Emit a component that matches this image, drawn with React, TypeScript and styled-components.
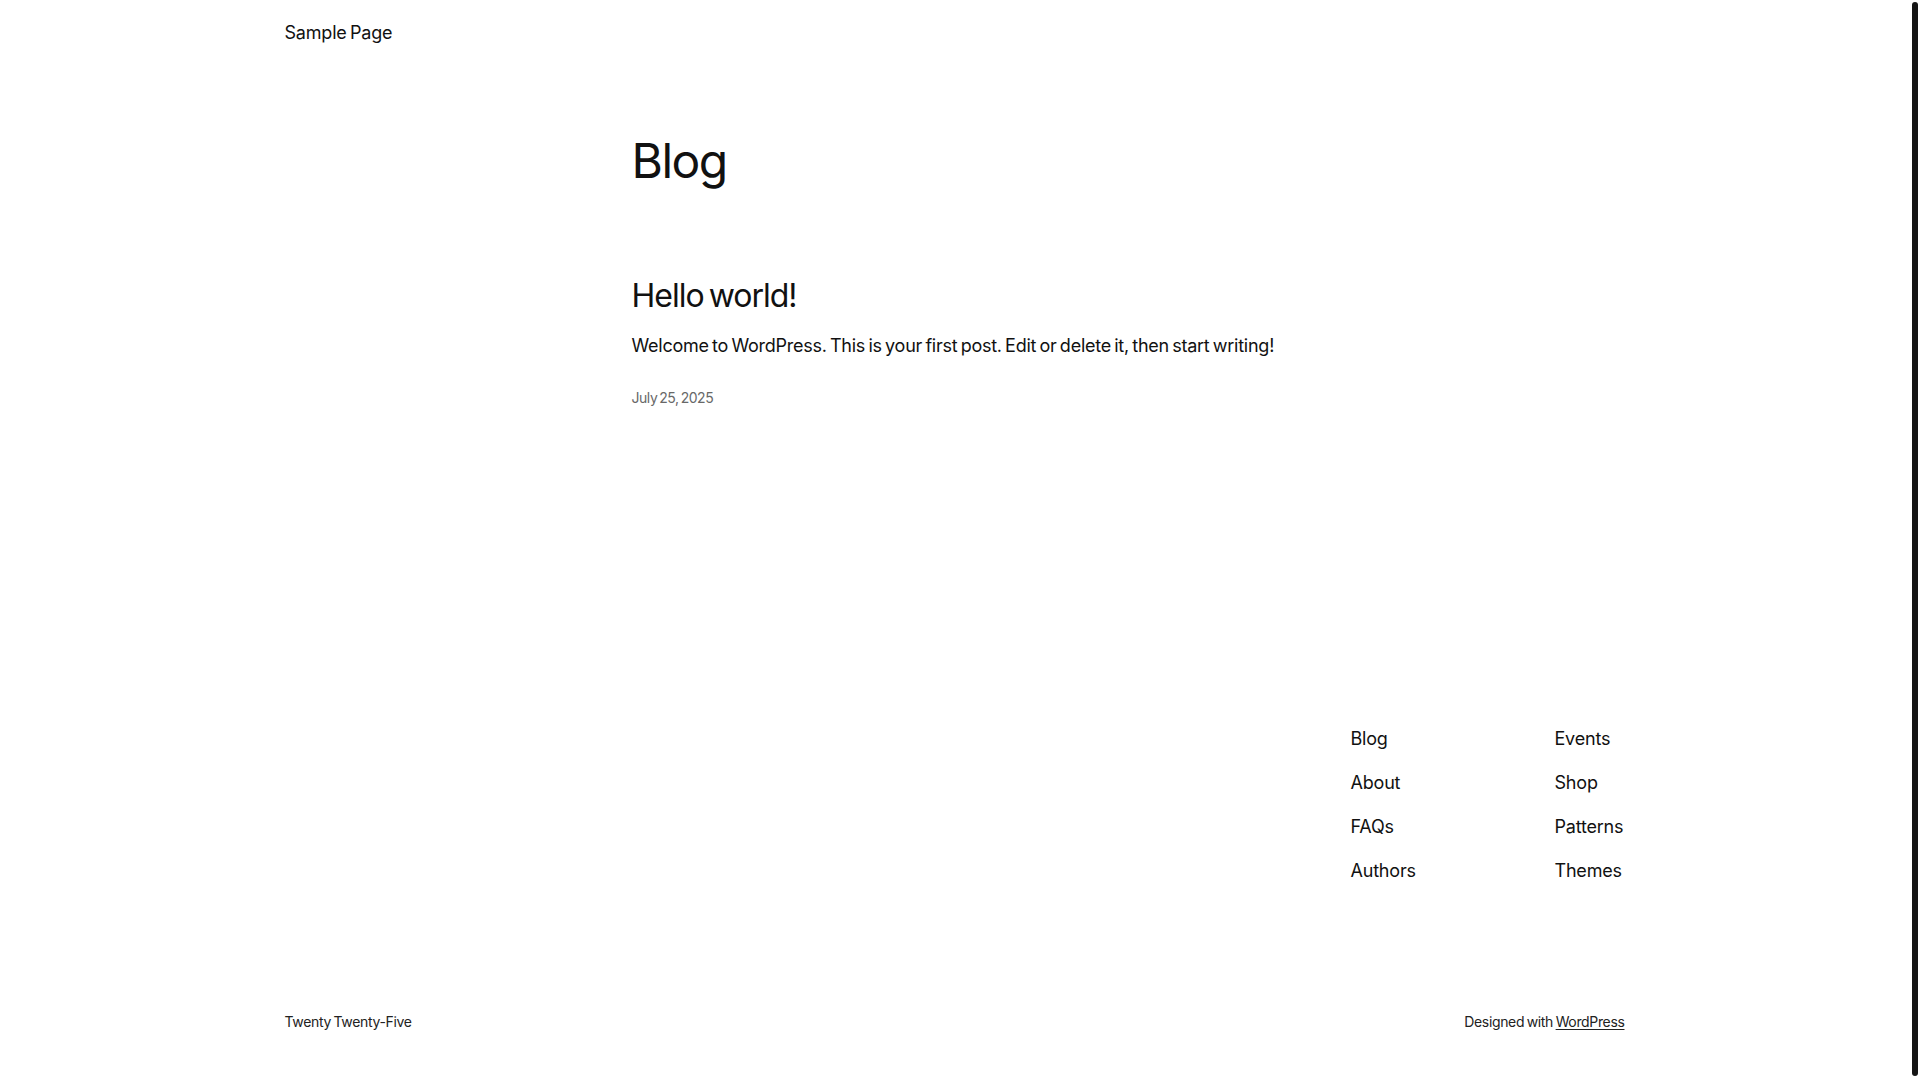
import styled, { createGlobalStyle } from 'styled-components';

const GlobalStyle = createGlobalStyle`
  html, body {
    margin: 0;
    padding: 0;
    height: 1080px;
    overflow: hidden;
    background: #ffffff;
  }
  body {
    font-family: Inter, "Noto Sans", sans-serif;
    color: #111111;
    -webkit-font-smoothing: antialiased;
  }
  a {
    color: inherit;
    text-decoration: none;
  }
`

const Shell = styled.div`
  display: flex;
  height: 1080px;
`

const Page = styled.div`
  flex: 1;
  display: flex;
  flex-direction: column;
  min-width: 0;
`

const ScrollTrack = styled.div`
  width: 15px;
  box-sizing: border-box;
  padding: 2px 2px 4px 7px;
  display: flex;
`

const ScrollThumb = styled.div`
  flex: 1;
  background: #151515;
  border-radius: 3px;
`

const Wide = styled.div`
  width: 1344px;
  margin: 0 auto;
  box-sizing: border-box;
  padding-left: 4px;
`

const Header = styled(Wide)`
  padding-top: 20px;
`

const NavLink = styled.a`
  display: block;
  font-size: 18px;
  line-height: 1.4;
  letter-spacing: -0.2px;
  word-spacing: -1.5px;
  white-space: nowrap;
`

const Main = styled.main`
  width: 645px;
  margin: 0 auto;
  padding-left: 3px;
`

const PageTitle = styled.h1`
  margin: 87px 0 0;
  font-size: 48px;
  font-weight: 400;
  line-height: 1.2;
  letter-spacing: -1.5px;
`

const Post = styled.article`
  margin-top: 87px;
`

const PostTitle = styled.h2`
  margin: 0;
  font-size: 32px;
  font-weight: 400;
  line-height: 1.2;
  letter-spacing: -1px;
  word-spacing: -3px;
`

const Excerpt = styled.p`
  margin: 18px 0 0;
  font-size: 18px;
  line-height: 1.4;
  letter-spacing: -0.25px;
  word-spacing: -1.5px;
  white-space: nowrap;
`

const PostDate = styled.time`
  display: block;
  margin-top: 30px;
  font-size: 14px;
  line-height: 1.4;
  letter-spacing: -0.45px;
  word-spacing: -1.5px;
  color: #686868;
`

const Footer = styled(Wide)`
  margin-top: 318px;
`

const FooterNavs = styled.div`
  display: grid;
  grid-template-columns: 204px 68px;
  justify-content: end;
  padding-right: 2px;
`

const NavColumn = styled.nav`
  display: flex;
  flex-direction: column;
  gap: 18.8px;
`

const Credits = styled.div`
  margin-top: 129px;
  display: flex;
  justify-content: space-between;
  font-size: 14px;
  line-height: 1.4;
  letter-spacing: -0.35px;
  word-spacing: -1px;
  color: #222;
`

const Underlined = styled.a`
  text-decoration: underline;
  text-underline-offset: 2px;
`

const leftLinks = ['Blog', 'About', 'FAQs', 'Authors']
const rightLinks = ['Events', 'Shop', 'Patterns', 'Themes']

export default function App() {
  return (
    <>
      <GlobalStyle />
      <Shell>
        <Page>
          <Header>
            <NavLink href="#">Sample Page</NavLink>
          </Header>
          <Main>
            <PageTitle>Blog</PageTitle>
            <Post>
              <PostTitle>Hello world!</PostTitle>
              <Excerpt>Welcome to WordPress. This is your first post. Edit or delete it, then start writing!</Excerpt>
              <PostDate>July 25, 2025</PostDate>
            </Post>
          </Main>
          <Footer>
            <FooterNavs>
              <NavColumn>
                {leftLinks.map(l => <NavLink key={l} href="#">{l}</NavLink>)}
              </NavColumn>
              <NavColumn>
                {rightLinks.map(l => <NavLink key={l} href="#">{l}</NavLink>)}
              </NavColumn>
            </FooterNavs>
            <Credits>
              <span>Twenty Twenty-Five</span>
              <span>Designed with <Underlined href="#">WordPress</Underlined></span>
            </Credits>
          </Footer>
        </Page>
        <ScrollTrack>
          <ScrollThumb />
        </ScrollTrack>
      </Shell>
    </>
  )
}
